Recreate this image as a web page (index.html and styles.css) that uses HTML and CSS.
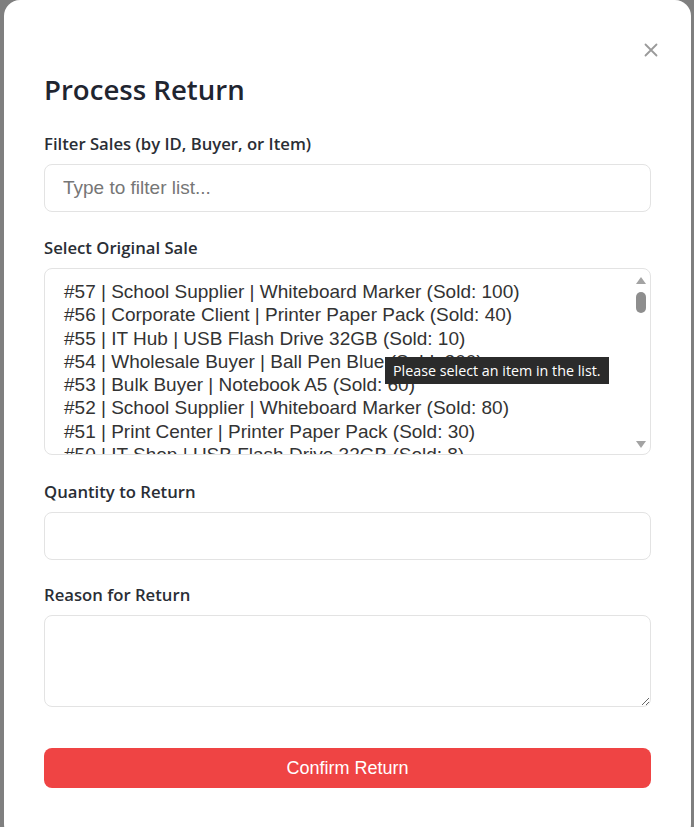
FILE: index.html
```html
<!DOCTYPE html>
<html lang="en">
<head>
<meta charset="utf-8">
<title>Process Return</title>
<link rel="stylesheet" href="styles.css">
</head>
<body>
<div class="backdrop">
  <div class="modal">
    <button class="close" aria-label="Close">
      <svg width="14" height="14" viewBox="0 0 14 14"><path d="M1.5 1.5 L12.5 12.5 M12.5 1.5 L1.5 12.5" stroke="#9a9a9a" stroke-width="1.8" stroke-linecap="round"/></svg>
    </button>
    <h2 class="title">Process Return</h2>

    <div class="field">
      <label class="label">Filter Sales (by ID, Buyer, or Item)</label>
      <input class="input" type="text" placeholder="Type to filter list...">
    </div>

    <div class="field field-sel">
      <label class="label">Select Original Sale</label>
      <div class="listbox">
        <div class="options">
          <div class="option">#57 | School Supplier | Whiteboard Marker (Sold: 100)</div>
          <div class="option">#56 | Corporate Client | Printer Paper Pack (Sold: 40)</div>
          <div class="option">#55 | IT Hub | USB Flash Drive 32GB (Sold: 10)</div>
          <div class="option">#54 | Wholesale Buyer | Ball Pen Blue (Sold: 200)</div>
          <div class="option">#53 | Bulk Buyer | Notebook A5 (Sold: 60)</div>
          <div class="option">#52 | School Supplier | Whiteboard Marker (Sold: 80)</div>
          <div class="option">#51 | Print Center | Printer Paper Pack (Sold: 30)</div>
          <div class="option">#50 | IT Shop | USB Flash Drive 32GB (Sold: 8)</div>
        </div>
        <div class="scrollbar">
          <span class="arrow up"></span>
          <span class="thumb"></span>
          <span class="track"></span>
          <span class="arrow down"></span>
        </div>
        <div class="tooltip">Please select an item in the list.</div>
      </div>
    </div>

    <div class="field">
      <label class="label">Quantity to Return</label>
      <input class="input" type="text">
    </div>

    <div class="field">
      <label class="label">Reason for Return</label>
      <textarea class="textarea"></textarea>
    </div>

    <button class="confirm">Confirm Return</button>
  </div>
</div>
</body>
</html>
```

FILE: styles.css
```css
* { box-sizing: border-box; }
html, body { margin: 0; padding: 0; }
body {
  background: #7f7f7f;
  height: 827px;
  overflow: hidden;
}
.backdrop {
  padding: 0 3px 0 4px;
}
.modal {
  position: relative;
  background: #ffffff;
  border-radius: 16px;
  height: 840px;
  padding: 72px 40px 0 40px;
  display: flex;
  flex-direction: column;
}
.close {
  position: absolute;
  top: 43px;
  right: 33px;
  width: 14px;
  height: 14px;
  padding: 0;
  border: 0;
  background: none;
  display: flex;
}
.title {
  margin: 0 0 25px 0;
  font-family: "Open Sans", sans-serif;
  font-weight: 600;
  font-size: 27.6px;
  line-height: 34px;
  color: #1f2530;
}
.field {
  display: flex;
  flex-direction: column;
  gap: 8px;
  margin-bottom: 22px;
}
.field:first-of-type { margin-bottom: 23px; }
.field-sel { margin-bottom: 24px; }
.label {
  font-family: "Open Sans", sans-serif;
  font-weight: 600;
  font-size: 16.7px;
  line-height: 25px;
  color: #2a2e35;
}
.input {
  height: 48px;
  border: 1px solid #e3e3e3;
  border-radius: 8px;
  padding: 0 18px;
  font-family: "Liberation Sans", Arial, sans-serif;
  font-size: 19px;
  color: #333;
  outline: none;
}
.input::placeholder { color: #767676; }
.listbox {
  position: relative;
  height: 187px;
  border: 1px solid #e3e3e3;
  border-radius: 8px;
  display: flex;
  overflow: hidden;
}
.options {
  flex: 1;
  padding: 11px 0 0 19px;
  overflow: hidden;
}
.option {
  font-family: "Liberation Sans", Arial, sans-serif;
  font-size: 19px;
  line-height: 23.3px;
  color: #333;
  white-space: nowrap;
}
.scrollbar {
  width: 17px;
  margin-right: 1px;
  display: flex;
  flex-direction: column;
  align-items: center;
  padding: 8px 0 6px;
}
.arrow {
  width: 0; height: 0;
  border-left: 5px solid transparent;
  border-right: 5px solid transparent;
}
.arrow.up { border-bottom: 7px solid #a3a3a3; }
.arrow.down { border-top: 7px solid #a3a3a3; }
.thumb {
  width: 10px;
  height: 21px;
  margin-top: 8px;
  border-radius: 5px;
  background: #8e8e8e;
}
.track { flex: 1; }
.tooltip {
  position: absolute;
  left: 340px;
  top: 88px;
  height: 27px;
  padding: 0 8px;
  background: #2b2b2b;
  color: #fff;
  font-family: "Open Sans", sans-serif;
  font-size: 14.3px;
  line-height: 27px;
  white-space: nowrap;
}
.textarea {
  height: 92px;
  border: 1px solid #e3e3e3;
  border-radius: 8px;
  resize: vertical;
  outline: none;
  font-family: "Liberation Sans", Arial, sans-serif;
  font-size: 18px;
}
.confirm {
  margin-top: 19px;
  height: 40px;
  border: 0;
  border-radius: 8px;
  background: #ef4444;
  color: #fff;
  font-family: "Liberation Sans", Arial, sans-serif;
  font-size: 18px;
}
```
